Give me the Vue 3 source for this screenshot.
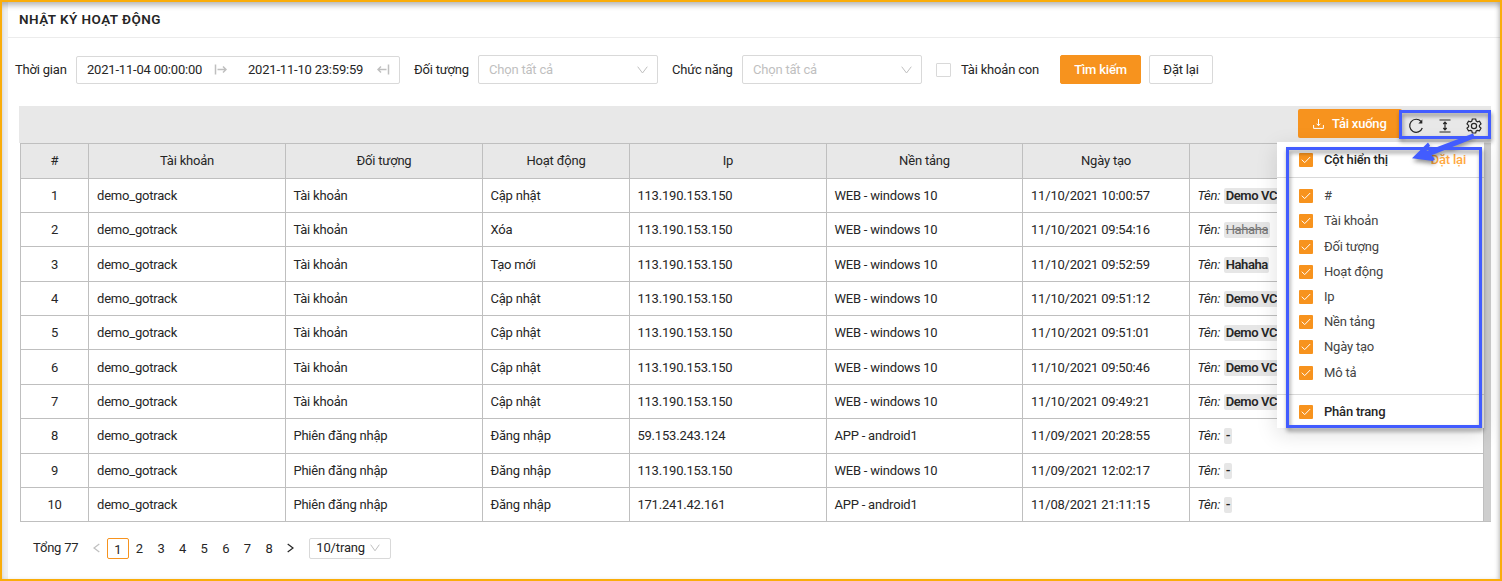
<script setup>
const columns = [
  { key: 'no', label: '#', center: true },
  { key: 'account', label: 'Tài khoản', wide: true },
  { key: 'target', label: 'Đối tượng' },
  { key: 'action', label: 'Hoạt động' },
  { key: 'ip', label: 'Ip' },
  { key: 'platform', label: 'Nền tảng' },
  { key: 'created', label: 'Ngày tạo', wide: true },
]
const row = (no, target, action, ip, platform, created, name, removed = false) => ({
  no, account: 'demo_gotrack', target, action, ip, platform, created, name, removed,
})
const web = 'WEB - windows 10'
const app = 'APP - android1'
const ip = '113.190.153.150'
const rows = [
  row(1, 'Tài khoản', 'Cập nhật', ip, web, '11/10/2021 10:00:57', 'Demo VCB'),
  row(2, 'Tài khoản', 'Xóa', ip, web, '11/10/2021 09:54:16', 'Hahaha', true),
  row(3, 'Tài khoản', 'Tạo mới', ip, web, '11/10/2021 09:52:59', 'Hahaha'),
  row(4, 'Tài khoản', 'Cập nhật', ip, web, '11/10/2021 09:51:12', 'Demo VCB'),
  row(5, 'Tài khoản', 'Cập nhật', ip, web, '11/10/2021 09:51:01', 'Demo VCB'),
  row(6, 'Tài khoản', 'Cập nhật', ip, web, '11/10/2021 09:50:46', 'Demo VCB'),
  row(7, 'Tài khoản', 'Cập nhật', ip, web, '11/10/2021 09:49:21', 'Demo VCB'),
  row(8, 'Phiên đăng nhập', 'Đăng nhập', '59.153.243.124', app, '11/09/2021 20:28:55', '-'),
  row(9, 'Phiên đăng nhập', 'Đăng nhập', ip, web, '11/09/2021 12:02:17', '-'),
  row(10, 'Phiên đăng nhập', 'Đăng nhập', '171.241.42.161', app, '11/08/2021 21:11:15', '-'),
]
const options = ['#', 'Tài khoản', 'Đối tượng', 'Hoạt động', 'Ip', 'Nền tảng', 'Ngày tạo', 'Mô tả']
const pages = [1, 2, 3, 4, 5, 6, 7, 8]
</script>

<template>
  <div class="screen">
    <main class="page">
      <h1 class="title">NHẬT KÝ HOẠT ĐỘNG</h1>

      <div class="filters">
        <span class="label l-time">Thời gian</span>
        <div class="range">
          <span class="date">2021-11-04 00:00:00</span>
          <svg class="rng" width="13" height="11" viewBox="0 0 13 11"><path d="M1.500 .5v10M3.500 5.500h8.500M9 2.500l3 3-3 3" /></svg>
          <span class="date second">2021-11-10 23:59:59</span>
          <svg class="rng" width="13" height="11" viewBox="0 0 13 11"><path d="M11.500 .5v10M9.500 5.500H1M4 2.500l-3 3 3 3" /></svg>
        </div>
        <span class="label l-target">Đối tượng</span>
        <div class="select">
          <span>Chọn tất cả</span>
          <svg width="11" height="8" viewBox="0 0 11 8"><path d="M.7.700l4.800 6.300L10.300.7" /></svg>
        </div>
        <span class="label l-func">Chức năng</span>
        <div class="select">
          <span>Chọn tất cả</span>
          <svg width="11" height="8" viewBox="0 0 11 8"><path d="M.7.700l4.800 6.300L10.300.7" /></svg>
        </div>
        <i class="empty-check"></i>
        <span class="sub">Tài khoản con</span>
        <button class="btn primary">Tìm kiếm</button>
        <button class="btn">Đặt lại</button>
      </div>

      <section class="grid-area">
        <div class="toolbar">
          <button class="download">
            <svg width="11" height="10" viewBox="0 0 11 10"><path d="M.6 6v3.400h9.800V6M5.500 0v6.500M3.600 4.700l1.900 2 1.900-2" /></svg>
            <span>Tải xuống</span>
          </button>
          <div class="tools">
            <svg width="16" height="16" viewBox="0 0 16 16"><path d="M13.100 3.500A6.500 6.500 0 1 0 14.300 10" /><path class="solid" d="M14.300 1.600v4h-4z" /></svg>
            <svg width="14" height="16" viewBox="0 0 14 16"><path d="M1.500 2h11M1.500 14h11M7 4.500v7M5.300 6l1.700-1.900L8.700 6M5.300 10l1.700 1.900L8.700 10" /></svg>
            <svg width="16" height="16" viewBox="0 0 16 16"><path d="M6.300 1h3.400l.5 2.100 1.200.7 2.100-.6 1.500 2.700-1.600 1.500v1.300l1.600 1.500-1.500 2.700-2.100-.6-1.200.7-.5 2H6.300l-.5-2-1.200-.7-2.100.6L1 10.200l1.600-1.500V7.400L1 5.900l1.500-2.700 2.100.6 1.200-.7z" /><circle cx="8" cy="8" r="2.600" /></svg>
          </div>
        </div>
        <div class="table-wrap">
          <div class="table">
            <div v-for="c in columns" :key="c.key" class="cell head">{{ c.label }}</div>
            <div class="cell head"></div>
            <template v-for="r in rows" :key="r.no">
              <div v-for="c in columns" :key="c.key" class="cell" :class="{ center: c.center, wide: c.wide, low: r.no === 3 || r.no === 6 }">{{ r[c.key] }}</div>
              <div class="cell" :class="{ low: r.no === 3 || r.no === 6 }"><em>Tên:</em><b class="tag" :class="{ removed: r.removed }">{{ r.name }}</b></div>
            </template>
          </div>
          <div class="gutter"></div>
        </div>

        <aside class="panel">
          <div class="panel-head">
            <i class="check"><svg width="10" height="8" viewBox="0 0 10 8"><path d="M.8 3.700l2.900 2.900L9.200 1" /></svg></i>
            <b>Cột hiển thị</b>
            <a>Đặt lại</a>
          </div>
          <div class="options">
            <div v-for="o in options" :key="o" class="option">
              <i class="check"><svg width="10" height="8" viewBox="0 0 10 8"><path d="M.8 3.700l2.900 2.900L9.200 1" /></svg></i>
              <span>{{ o }}</span>
            </div>
          </div>
          <div class="panel-foot">
            <i class="check"><svg width="10" height="8" viewBox="0 0 10 8"><path d="M.8 3.700l2.900 2.900L9.200 1" /></svg></i>
            <b>Phân trang</b>
          </div>
        </aside>
      </section>

      <nav class="pager">
        <span class="total">Tổng 77</span>
        <svg class="arrow dim" width="7" height="10" viewBox="0 0 7 10"><path d="M6.300 1L1 5l5.300 4" /></svg>
        <span v-for="p in pages" :key="p" class="num" :class="{ active: p === 1 }">{{ p }}</span>
        <svg class="arrow" width="7" height="10" viewBox="0 0 7 10"><path d="M.7 1L6 5 .7 9" /></svg>
        <div class="size">
          <span>10/trang</span>
          <svg width="10" height="8" viewBox="0 0 10 8"><path d="M.7.700l4.300 6.100L9.300.7" /></svg>
        </div>
      </nav>
    </main>

    <svg class="marks" width="1502" height="581" viewBox="0 0 1502 581">
      <g fill="none" stroke="#425cff" stroke-width="3">
        <rect x="1400.500" y="111.500" width="89" height="26" />
        <rect x="1287.500" y="148.500" width="193" height="278" />
      </g>
      <path fill="#425cff" d="M1473 133.500l2 4.500-43.500 17.200 3 3.300-1.500 2.500-21-2.800 16-15.700 2 3-3.500 5.500z" />
    </svg>
    <div class="frame"></div>
  </div>
</template>

<style>
body { margin: 0; overflow: hidden; }
</style>

<style scoped>
.screen, .screen * { box-sizing: border-box; }
.screen {
  position: relative;
  width: 1502px;
  height: 581px;
  padding-left: 8px;
  background: #f0f0f0;
  font: 13px/20px Roboto, "Noto Sans", sans-serif;
  letter-spacing: -.2px;
  color: #262626;
  overflow: hidden;
}
svg { display: block; flex: none; fill: none; stroke: currentColor; }
button { font: inherit; color: inherit; letter-spacing: inherit; }
.page { height: 581px; background: #fff; }
.title {
  margin: 0;
  height: 38px;
  padding: 9px 0 0 11px;
  border-bottom: 1px solid #ececec;
  font-size: 13.500px;
  line-height: 20px;
  font-weight: 600;
  letter-spacing: .45px;
}
.filters { display: flex; align-items: center; height: 68px; padding: 0 0 5px 7px; }
.label { flex: none; white-space: nowrap; }
.l-time { width: 61px; }
.l-target { width: 64px; }
.l-func { width: 70px; }
.range {
  display: flex; align-items: center;
  width: 324px; height: 28px; margin-right: 14px; padding-left: 10px;
  border: 1px solid #d9d9d9; border-radius: 2px;
}
.date { width: 127px; }
.date.second { width: 129px; margin-left: 21px; }
.rng { color: #bfbfbf; stroke-width: 1.500; }
.select {
  display: flex; align-items: center; justify-content: space-between;
  width: 180px; height: 29px; margin-right: 14px; padding: 0 9px 0 10px;
  border: 1px solid #d9d9d9; border-radius: 2px; color: #bfbfbf;
  letter-spacing: -.2px;
}
.empty-check { width: 15px; height: 14px; border: 1px solid #d9d9d9; border-radius: 1px; }
.sub { width: 99px; margin-left: 10px; }
.btn {
  width: 64px; height: 29px; padding: 0; margin-right: 8px;
  background: #fff; border: 1px solid #d9d9d9; border-radius: 2px;
}
.btn.primary { width: 81px; background: #f7931e; border-color: #f7931e; color: #fff; font-weight: 500; }
.grid-area { position: relative; width: 1472px; margin-left: 11px; }
.toolbar { display: flex; justify-content: flex-end; height: 37px; padding-top: 3px; background: #e8e8e8; }
.download {
  display: flex; align-items: center; gap: 8px;
  width: 104px; height: 29px; padding: 0 0 0 15px;
  border: 0; border-radius: 2px; background: #f7931e; color: #fff; font-weight: 500;
}
.tools { display: flex; align-items: center; width: 89px; height: 33px; padding-left: 5.500px; gap: 14px; color: #262626; stroke-width: 1.200; }
.tools .solid { fill: currentColor; stroke: none; }
.table-wrap { display: flex; height: 379px; padding-left: 1px; }
.table {
  display: grid;
  width: 1464px;
  grid-template-columns: 68px 197px 197px 147px 197px 196px 167px 294px;
  grid-template-rows: 35px 34px 34px 35px 34px 34px 35px 34px 35px 34px 34px;
  border: solid #bfbfbf; border-width: 1px 0 0 1px;
}
.cell {
  display: flex; align-items: center;
  padding-left: 7.400px;
  border: solid #bfbfbf; border-width: 0 1px 1px 0;
  white-space: nowrap;
}
.cell.wide { padding-left: 8px; }
.cell.head { justify-content: center; padding: 0; background: #e8e8e8; }
.cell.center { justify-content: center; padding: 0; }
.cell.low { padding-top: 1px; }
.gutter { width: 7px; background: #cecece; border-bottom: 1px solid #bfbfbf; }
.tag { margin-left: 4px; padding: 0 1.500px; line-height: 16px; letter-spacing: -.42px; border-radius: 2px; background: #e6e6e6; font-weight: 600; }
.tag.removed { color: #777; font-weight: 400; text-decoration: line-through; }
.panel {
  position: absolute; left: 1258px; top: 36px;
  width: 207px; height: 286px;
  background: #fff;
  letter-spacing: -.2px;
  box-shadow: 0 6px 20px rgba(0, 0, 0, .13);
}
.panel-head, .option, .panel-foot { display: flex; align-items: center; padding-left: 22px; }
.panel-head { height: 36px; border-bottom: 1px solid #d9d9d9; }
.panel b { font-weight: 500; }
.panel-head a { margin-left: auto; padding-right: 18px; color: #ffa940; font-weight: 500; }
.check {
  display: flex; align-items: center; justify-content: center; flex: none;
  width: 14px; height: 14px; margin-right: 11px;
  border-radius: 1px; background: #f7931e; color: #fff;
}
.options { height: 217px; padding-top: 5.600px; border-bottom: 1px solid #d9d9d9; color: #444; }
.option { height: 25.200px; }
.panel-foot { height: 33px; }
.pager { display: flex; align-items: center; height: 22px; margin: 15px 0 0 25px; }
.total { width: 60px; }
.arrow { margin-right: 7px; stroke-width: 1.200; }
.arrow.dim { color: #bfbfbf; }
.num { width: 21.600px; height: 21px; text-align: center; line-height: 22px; }
.num.active { border: 1px solid #f7931e; border-radius: 2px; line-height: 21px; }
.pager .arrow:not(.dim) { margin: 0 15px 0 7px; }
.size {
  display: flex; align-items: center; gap: 5px;
  width: 82px; height: 21px; padding-left: 6.500px;
  border: 1px solid #d9d9d9; border-radius: 2px;
  letter-spacing: -.15px;
}
.size svg { color: #bfbfbf; }
.marks { position: absolute; left: 0; top: 0; filter: drop-shadow(1px 3px 2px rgba(0, 0, 0, .42)); stroke: none; }
.frame {
  position: absolute; inset: 0;
  border: 2px solid #faad0a;
  box-shadow: inset 0 5px 5px -1px rgba(0, 0, 0, .23), inset -3px 0 4px -1px rgba(0, 0, 0, .15);
}
</style>
